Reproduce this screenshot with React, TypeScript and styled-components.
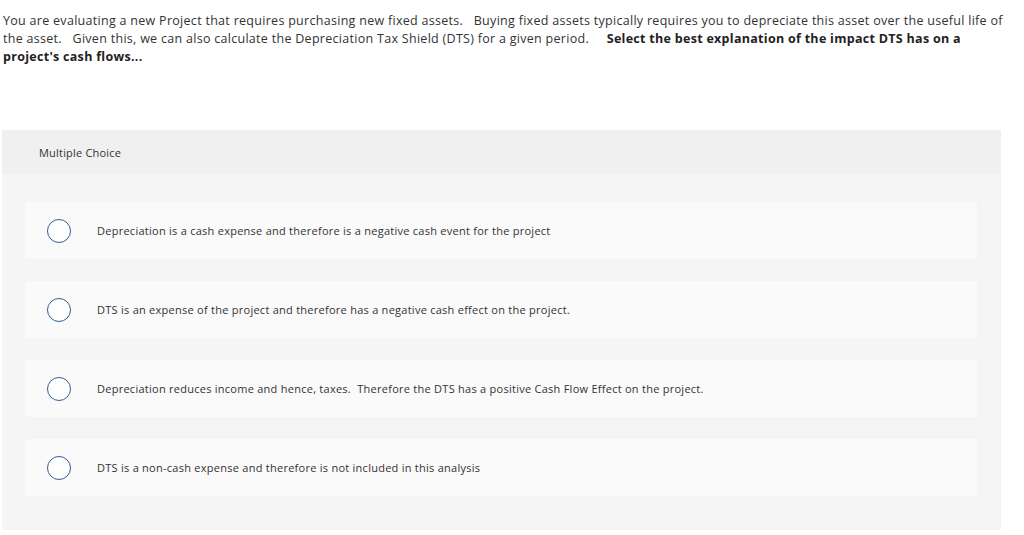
import React from "react";
import styled, { createGlobalStyle } from "styled-components";

const Global = createGlobalStyle`
  html, body { margin: 0; padding: 0; background: #ffffff; }
  body { font-family: "Open Sans", "Lato", sans-serif; color: #333333; }
`;

const Page = styled.div`
  width: 1024px;
  padding: 12px 0 0 3px;
  box-sizing: border-box;
`;

const Prompt = styled.p`
  margin: 0;
  width: 1014px;
  font-size: 12.5px;
  line-height: 18px;
  letter-spacing: 0.29px;
  color: #333333;
  white-space: pre-wrap;
`;

const Strong = styled.strong`
  font-weight: 700;
  color: #222222;
`;

const Panel = styled.section`
  margin: 64px 0 0 -1px;
  width: 999px;
  background: #f5f5f5;
  border-radius: 2px;
  overflow: hidden;
`;

const PanelHeader = styled.div`
  height: 44px;
  background: #f0f0f0;
  display: flex;
  align-items: center;
  padding-left: 37px;
  font-size: 11px;
  letter-spacing: 0.2px;
  color: #333333;
`;

const Options = styled.div`
  display: flex;
  flex-direction: column;
  gap: 22px;
  padding: 28px 24px 34px 23px;
`;

const OptionCard = styled.label`
  height: 57px;
  background: #fafafa;
  border-radius: 3px;
  display: flex;
  align-items: center;
  padding-left: 22px;
  cursor: pointer;
`;

const Radio = styled.span`
  width: 22px;
  height: 22px;
  border-radius: 50%;
  border: 1px solid #2e5d91;
  background: #ffffff;
  flex: none;
`;

const OptionText = styled.span`
  margin-left: 26px;
  font-size: 11px;
  letter-spacing: 0.26px;
  color: #333333;
  white-space: pre-wrap;
`;

const options = [
  "Depreciation is a cash expense and therefore is a negative cash event for the project",
  "DTS is an expense of the project and therefore has a negative cash effect on the project.",
  "Depreciation reduces income and hence, taxes.  Therefore the DTS has a positive Cash Flow Effect on the project.",
  "DTS is a non-cash expense and therefore is not included in this analysis",
];

export default function App() {
  return (
    <Page>
      <Global />
      <Prompt>
        {"You are evaluating a new Project that requires purchasing new fixed assets.   Buying fixed assets typically requires you to depreciate this asset over the useful life of the asset.   Given this, we can also calculate the Depreciation Tax Shield (DTS) for a given period.     "}
        <Strong>Select the best explanation of the impact DTS has on a project's cash flows...</Strong>
      </Prompt>
      <Panel>
        <PanelHeader>Multiple Choice</PanelHeader>
        <Options>
          {options.map((o) => (
            <OptionCard key={o}>
              <Radio />
              <OptionText>{o}</OptionText>
            </OptionCard>
          ))}
        </Options>
      </Panel>
    </Page>
  );
}
